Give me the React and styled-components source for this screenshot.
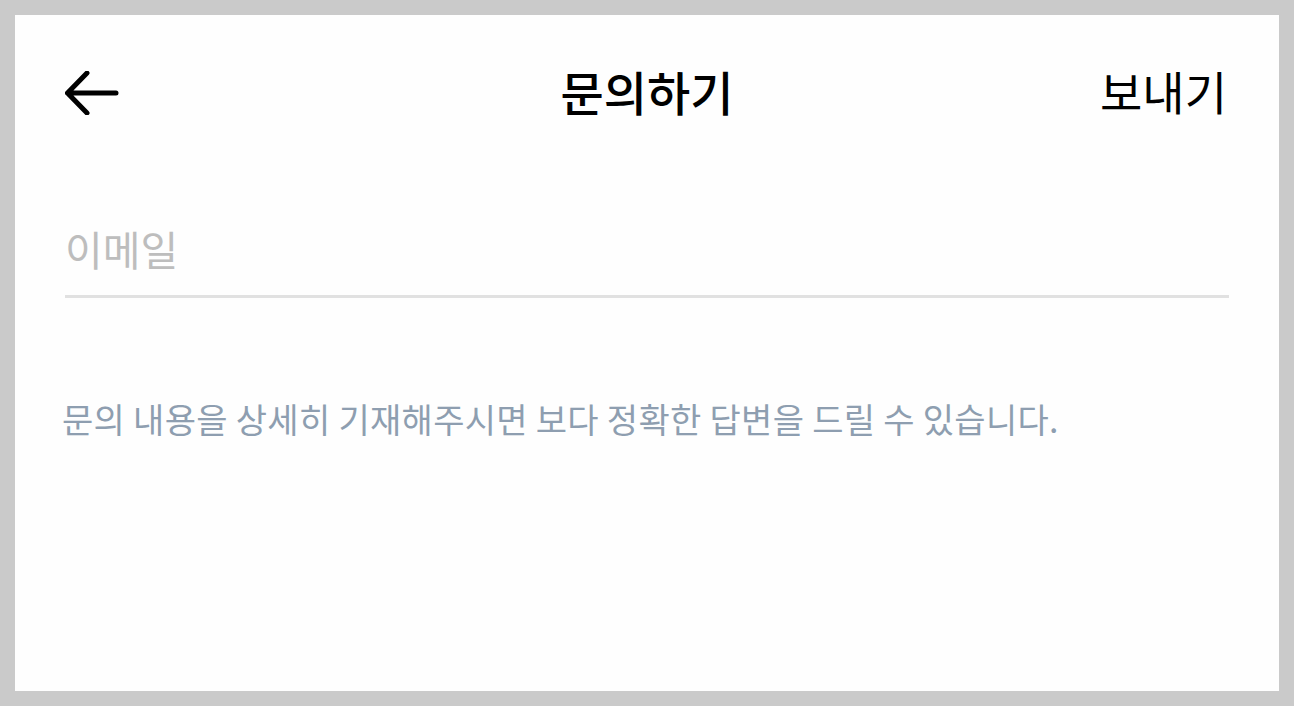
import React from 'react';
import styled, { createGlobalStyle } from 'styled-components';

const GlobalStyle = createGlobalStyle`
  body {
    margin: 0;
    background: #cacaca;
    font-family: "Noto Sans CJK KR", "Noto Sans", sans-serif;
  }
`;

const Frame = styled.div`
  padding: 15px;
`;

const Panel = styled.div`
  background: #fefefe;
  height: 676px;
  padding: 0 50px;
  box-sizing: border-box;
  display: flex;
  flex-direction: column;
`;

const Header = styled.header`
  height: 150px;
  display: grid;
  grid-template-columns: 1fr auto 1fr;
  align-items: center;
`;

const BackButton = styled.button`
  justify-self: start;
  margin-top: 6px;
  background: none;
  border: 0;
  padding: 0;
  display: flex;
  cursor: pointer;
`;

const Title = styled.h1`
  margin: 0;
  font-size: 47px;
  font-weight: 500;
  color: #000;
  line-height: 1;
`;

const SendButton = styled.button`
  justify-self: end;
  background: none;
  border: 0;
  padding: 0;
  font-family: inherit;
  font-size: 46px;
  font-weight: 400;
  color: #000;
  line-height: 1;
  margin-right: 2px;
  cursor: pointer;
`;

const EmailInput = styled.input`
  margin-top: 59px;
  border: 0;
  border-bottom: 3px solid #e1e1e1;
  padding: 0 0 22px 0;
  font-family: inherit;
  font-size: 41px;
  line-height: 1.2;
  color: #222;
  background: transparent;
  outline: none;
  &::placeholder {
    color: #bdbdbd;
  }
`;

const Hint = styled.p`
  margin: 101px 0 0 -3px;
  font-size: 34px;
  letter-spacing: 0.3px;
  line-height: 1.2;
  color: #8e9eb0;
  white-space: nowrap;
`;

const BackArrow = () => (
  <svg width="56" height="44" viewBox="0 0 56 44" fill="none">
    <path
      d="M22 2 L2.5 22 L22 42 M2.5 22 L51 22"
      stroke="#000"
      strokeWidth="5"
      strokeLinecap="round"
      strokeLinejoin="round"
    />
  </svg>
);

export default function App() {
  return (
    <>
      <GlobalStyle />
      <Frame>
        <Panel>
          <Header>
            <BackButton aria-label="뒤로">
              <BackArrow />
            </BackButton>
            <Title>문의하기</Title>
            <SendButton>보내기</SendButton>
          </Header>
          <EmailInput type="email" placeholder="이메일" />
          <Hint>문의 내용을 상세히 기재해주시면 보다 정확한 답변을 드릴 수 있습니다.</Hint>
        </Panel>
      </Frame>
    </>
  );
}
